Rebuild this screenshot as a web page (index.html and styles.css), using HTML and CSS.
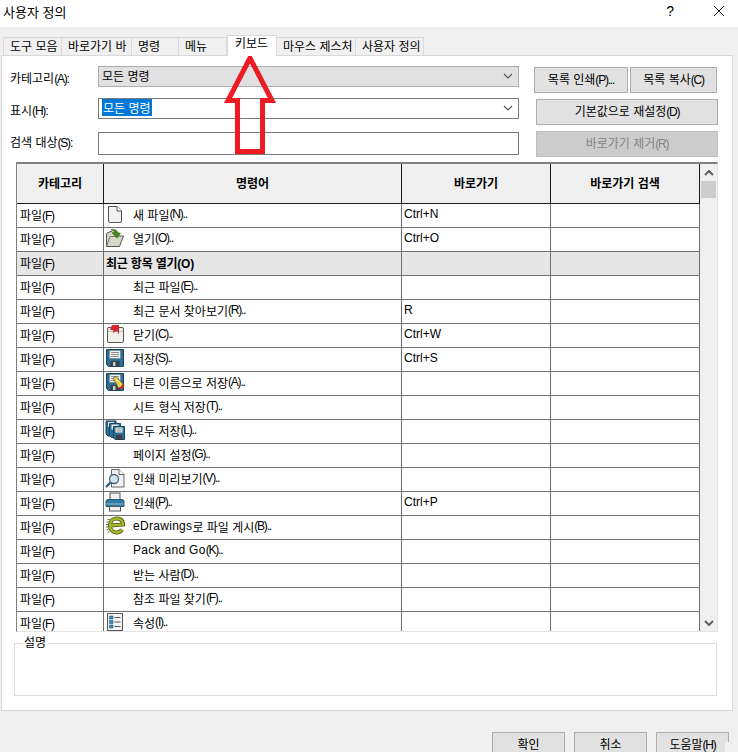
FILE: index.html
```html
<!DOCTYPE html>
<html lang="ko">
<head>
  <meta charset="UTF-8" />
  <title>사용자 정의</title>
  <link rel="stylesheet" href="styles.css">
</head>
<body>
  <!-- icon set -->
  <svg class="defs" width="0" height="0">
    <symbol id="i-new" viewBox="0 0 20 20">
      <path d="M3.500 2.500h8.500l4.500 4.500v10a1.500 1.500 0 0 1-1.500 1.500h-10a1.500 1.500 0 0 1-1.500-1.500z" fill="#f1f1f1" stroke="#555"/>
      <path d="M12 2.500v4.500h4.500" fill="#fff" stroke="#555"/>
    </symbol>
    <symbol id="i-open" viewBox="0 0 20 20">
      <path d="M1.500 18.500v-13l5-2.500 1 2h4v3h7l-4 10.500z" fill="#d8d6c8" stroke="#555"/>
      <path d="M1.500 18.500l3.500-10h7" fill="none" stroke="#777"/>
      <path d="M6 1.500c4-.5 6 .5 7 3.500h2.500l-3.500 5-4.500-5h2.500c-.5-1.500-2-2.500-4-3.500z" fill="#3f8a12" stroke="#2c6a0a" stroke-width=".6"/>
    </symbol>
    <symbol id="i-close" viewBox="0 0 20 20">
      <path d="M3 3.500h14a1.500 1.500 0 0 1 1.500 1.500v12a1.500 1.500 0 0 1-1.500 1.500h-13a1.500 1.500 0 0 1-1.500-1.500v-12z" fill="#f2f1ea" stroke="#555"/>
      <path d="M3 7.500h15" stroke="#bbb" fill="none"/>
      <path d="M7 1h7v9.500l-2-3.500c-1.500 0-3 1-3.500 2.500l-.5-3.500h-3z" fill="#d8262c"/>
    </symbol>
    <symbol id="i-save" viewBox="0 0 20 20">
      <path d="M1.500 1.500h17v17h-15l-2-2z" fill="#2d6f94" stroke="#17445f"/>
      <rect x="4.500" y="2.500" width="11" height="8" fill="#eceff0" stroke="#6b7f8a" stroke-width=".6"/>
      <path d="M6 4.500h8M6 6.500h8M6 8.500h8" stroke="#8a8f92"/>
      <rect x="5.500" y="13" width="9" height="5.500" fill="#3b3f42"/>
      <rect x="8" y="14" width="2.500" height="4" fill="#c9ced1"/>
    </symbol>
    <symbol id="i-saveas" viewBox="0 0 20 20">
      <use href="#i-save"/>
      <path d="M8 6l3-1.500 7 7.500-2 3-3 1-1-3z" fill="#f1d356" stroke="#59502a" stroke-width=".7"/>
      <path d="M13 16.500l3-1.500 2-3 1.500 1.500-2 3.500z" fill="#d8262c"/>
    </symbol>
    <symbol id="i-saveall" viewBox="0 0 20 20">
      <path d="M1 1h10v15h-8l-2-2z" fill="#2d6f94" stroke="#17445f"/>
      <path d="M3 2h6v5h-6z" fill="#dfe4e6"/>
      <path d="M4.500 3.500h11v14h-9l-2-2z" fill="#2d6f94" stroke="#17445f"/>
      <path d="M6.500 4.500h7v5h-7z" fill="#dfe4e6"/>
      <path d="M8.500 6.500h11v13h-9.500l-1.500-1.500z" fill="#2d6f94" stroke="#17445f"/>
      <rect x="10.500" y="7.500" width="7" height="5" fill="#eceff0"/>
      <path d="M11.500 9h5M11.500 11h5" stroke="#8a8f92"/>
      <rect x="11" y="15" width="6" height="4.500" fill="#3b3f42"/>
    </symbol>
    <symbol id="i-preview" viewBox="0 0 20 20">
      <path d="M6.500 1.500h7.500l5 5v12.500h-12.500z" fill="#f1f1f1" stroke="#666"/>
      <path d="M14 1.500v5h5" fill="#fff" stroke="#666"/>
      <circle cx="9" cy="11" r="4.500" fill="#d4e4ee" stroke="#4a6475" stroke-width="1.300"/>
      <path d="M5.500 14.500l-4.500 4.500" stroke="#2d5f80" stroke-width="2.400"/>
    </symbol>
    <symbol id="i-print" viewBox="0 0 20 20">
      <rect x="5" y="1" width="10" height="7" fill="#f1f1f1" stroke="#555"/>
      <path d="M1 9.500a2 2 0 0 1 2-2h14a2 2 0 0 1 2 2v5h-18z" fill="#2f7ca3" stroke="#1d5a7c"/>
      <path d="M1.500 12h17" stroke="#8fc3dc"/>
      <rect x="4.500" y="14.500" width="11" height="4.500" fill="#f1f1f1" stroke="#555"/>
    </symbol>
    <symbol id="i-edraw" viewBox="0 0 20 20">
      <path d="M2.500 3.500h2M1.500 6h2M1 8.500h2M1 11h2M1.500 13.500h2M2.500 16h2" stroke="#666" fill="none"/>
      <path d="M6 9.500l12-1c0-4-2.500-6-6.500-6s-6.500 3-6.500 7 2.500 7 6.500 7c2.500 0 4.500-1 5.500-3" fill="none" stroke="#4d5210" stroke-width="4"/>
      <path d="M6 9.500l12-1c0-4-2.500-6-6.500-6s-6.500 3-6.500 7 2.500 7 6.500 7c2.500 0 4.500-1 5.500-3" fill="none" stroke="#a8b82c" stroke-width="2.400"/>
    </symbol>
    <symbol id="i-props" viewBox="0 0 20 20">
      <rect x="2.500" y="1.500" width="15" height="17" fill="#f3f3f3" stroke="#555"/>
      <path d="M4.500 4h3.500v3h-3.500zM4.500 8.500h3.500v3h-3.500zM4.500 13h3.500v3h-3.500z" fill="#3d8ab5" stroke="#1f5f85" stroke-width=".6"/>
      <path d="M9.500 5.500h6M9.500 10h6M9.500 14.500h6" stroke="#555"/>
    </symbol>
  </svg>

  <header class="titlebar">
    <span class="title">사용자 정의</span>
    <span class="help">?</span>
    <svg class="close-x" width="12" height="12" viewBox="0 0 12 12"><path d="M1 1l10 10M11 1l-10 10" stroke="#222" fill="none"/></svg>
  </header>

  <main class="dialog">
    <nav class="tabs">
      <div class="tab">도구 모음</div>
      <div class="tab">바로가기 바</div>
      <div class="tab">명령</div>
      <div class="tab">메뉴</div>
      <div class="tab active">키보드</div>
      <div class="tab">마우스 제스처</div>
      <div class="tab">사용자 정의</div>
    </nav>

    <section class="panel">
      <div class="form">
        <div class="fields">
          <div class="field">
            <label>카테고리<span class="key">(A):</span></label>
            <div class="combo locked">모든 명령
              <svg class="chevron" width="10" height="6" viewBox="0 0 10 6"><path d="M1 1l4 4 4-4" fill="none" stroke="#555" stroke-width="1.200"/></svg>
            </div>
          </div>
          <div class="field">
            <label>표시<span class="key">(H):</span></label>
            <div class="combo"><span class="selected">모든 명령</span>
              <svg class="chevron" width="10" height="6" viewBox="0 0 10 6"><path d="M1 1l4 4 4-4" fill="none" stroke="#555" stroke-width="1.200"/></svg>
            </div>
          </div>
          <div class="field search">
            <label>검색 대상<span class="key">(S):</span></label>
            <div class="combo tall"></div>
          </div>
        </div>
        <div class="actions">
          <div class="btn-row">
            <button class="btn print">목록 인쇄<span class="key">(P)...</span></button>
            <button class="btn copy">목록 복사<span class="key">(C)</span></button>
          </div>
          <button class="btn wide">기본값으로 재설정<span class="key">(D)</span></button>
          <button class="btn wide disabled">바로가기 제거<span class="key">(R)</span></button>
        </div>
      </div>

      <div class="grid">
        <table class="cmds">
          <colgroup><col class="c1"><col class="c2"><col class="c3"><col class="c4"></colgroup>
          <thead>
            <tr><th>카테고리</th><th>명령어</th><th>바로가기</th><th>바로가기 검색</th></tr>
          </thead>
          <tbody>
            <tr><td>파일<span class="key">(F)</span></td><td><div class="cmd"><svg class="ico"><use href="#i-new"/></svg>새 파일<span class="key">(N)..</span></div></td><td>Ctrl+N</td><td></td></tr>
            <tr><td>파일<span class="key">(F)</span></td><td><div class="cmd"><svg class="ico"><use href="#i-open"/></svg>열기<span class="key">(O)..</span></div></td><td>Ctrl+O</td><td></td></tr>
            <tr class="group"><td>파일<span class="key">(F)</span></td><td class="bold">최근 항목 열기(O)</td><td></td><td></td></tr>
            <tr><td>파일<span class="key">(F)</span></td><td><div class="cmd plain">최근 파일<span class="key">(E)..</span></div></td><td></td><td></td></tr>
            <tr><td>파일<span class="key">(F)</span></td><td><div class="cmd plain">최근 문서 찾아보기<span class="key">(R)..</span></div></td><td>R</td><td></td></tr>
            <tr><td>파일<span class="key">(F)</span></td><td><div class="cmd"><svg class="ico"><use href="#i-close"/></svg>닫기<span class="key">(C)..</span></div></td><td>Ctrl+W</td><td></td></tr>
            <tr><td>파일<span class="key">(F)</span></td><td><div class="cmd"><svg class="ico"><use href="#i-save"/></svg>저장<span class="key">(S)..</span></div></td><td>Ctrl+S</td><td></td></tr>
            <tr><td>파일<span class="key">(F)</span></td><td><div class="cmd"><svg class="ico"><use href="#i-saveas"/></svg>다른 이름으로 저장<span class="key">(A)..</span></div></td><td></td><td></td></tr>
            <tr><td>파일<span class="key">(F)</span></td><td><div class="cmd plain">시트 형식 저장<span class="key">(T)..</span></div></td><td></td><td></td></tr>
            <tr><td>파일<span class="key">(F)</span></td><td><div class="cmd"><svg class="ico"><use href="#i-saveall"/></svg>모두 저장<span class="key">(L)..</span></div></td><td></td><td></td></tr>
            <tr><td>파일<span class="key">(F)</span></td><td><div class="cmd plain">페이지 설정<span class="key">(G)..</span></div></td><td></td><td></td></tr>
            <tr><td>파일<span class="key">(F)</span></td><td><div class="cmd"><svg class="ico"><use href="#i-preview"/></svg>인쇄 미리보기<span class="key">(V)..</span></div></td><td></td><td></td></tr>
            <tr><td>파일<span class="key">(F)</span></td><td><div class="cmd"><svg class="ico"><use href="#i-print"/></svg>인쇄<span class="key">(P)..</span></div></td><td>Ctrl+P</td><td></td></tr>
            <tr><td>파일<span class="key">(F)</span></td><td><div class="cmd"><svg class="ico"><use href="#i-edraw"/></svg><span class="wide-latin">eDrawings</span>로 파일 게시<span class="key">(B)..</span></div></td><td></td><td></td></tr>
            <tr><td>파일<span class="key">(F)</span></td><td><div class="cmd plain"><span class="wide-latin">Pack and Go</span><span class="key">(K)..</span></div></td><td></td><td></td></tr>
            <tr><td>파일<span class="key">(F)</span></td><td><div class="cmd plain">받는 사람<span class="key">(D)..</span></div></td><td></td><td></td></tr>
            <tr><td>파일<span class="key">(F)</span></td><td><div class="cmd plain">참조 파일 찾기<span class="key">(F)..</span></div></td><td></td><td></td></tr>
            <tr><td>파일<span class="key">(F)</span></td><td><div class="cmd"><svg class="ico"><use href="#i-props"/></svg>속성<span class="key">(I)..</span></div></td><td></td><td></td></tr>
          </tbody>
        </table>
        <div class="scrollbar">
          <svg width="10" height="6" viewBox="0 0 10 6"><path d="M1 5l4-4 4 4" fill="none" stroke="#606060" stroke-width="2"/></svg>
          <div class="thumb"></div>
          <svg class="down" width="10" height="6" viewBox="0 0 10 6"><path d="M1 1l4 4 4-4" fill="none" stroke="#606060" stroke-width="2"/></svg>
        </div>
      </div>

      <fieldset class="desc">
        <legend>설명</legend>
      </fieldset>
    </section>

    <footer class="footer">
      <button class="btn foot">확인</button>
      <button class="btn foot">취소</button>
      <button class="btn foot">도움말<span class="key">(H)</span></button>
    </footer>
  </main>

  <div class="grip"></div>

  <!-- red annotation arrow -->
  <svg class="arrow" width="60" height="110" viewBox="0 0 60 110">
    <path d="M30 12L8 54.500H17.500V105.500H42.500V54.500H52Z" fill="none" stroke="#ed1c24" stroke-width="5"/>
  </svg>
</body>
</html>
```

FILE: styles.css
```css
* {
  box-sizing: border-box;
}

body {
  position: relative;
  margin: 0;
  width: 738px;
  height: 752px;
  overflow: hidden;
  background: #fff;
  color: #000;
  font-family: "Liberation Sans", "Noto Sans CJK KR", sans-serif;
  font-size: 12px;
}

.defs {
  position: absolute;
}

/* mnemonics are narrow in the original font */
.key {
  letter-spacing: -1.2px;
}
.wide-latin {
  letter-spacing: 0.3px;
}

/* title bar */
.titlebar {
  display: flex;
  align-items: center;
  height: 27px;
  padding: 0 13px 5px 3px;
}
.title {
  flex: 1;
  font-size: 13px;
}
.help {
  margin-right: 39px;
  font-size: 14px;
}

.dialog {
  height: 725px;
  padding-top: 8px;
  background: #f0f0f0;
}

/* tabs */
.tabs {
  display: grid;
  grid-template-columns: 59px 70px 47px 48px 50px 79px 68px;
  align-items: end;
  height: 20px;
  margin-left: 3px;
}
.tab {
  height: 18px;
  padding: 1px 0 0 6px;
  line-height: 16px;
  background: #f0f0f0;
  border: 1px solid #d9d9d9;
  border-bottom: none;
  border-left: none;
  white-space: nowrap;
}
.tab:first-child {
  border-left: 1px solid #d9d9d9;
}
.tab.active {
  position: relative;
  z-index: 1;
  height: 21px;
  margin-bottom: -1px;
  padding-top: 0;
  padding-left: 7px;
  background: #fff;
  border-left: 1px solid #d9d9d9;
}

.panel {
  width: 732px;
  height: 656px;
  margin-left: 1px;
  padding: 10px 0 0 8px;
  background: #fff;
  border: 1px solid #d9d9d9;
}

/* top form */
.form {
  display: flex;
  gap: 15px;
  height: 91px;
}
.fields {
  width: 509px;
}
.field {
  display: flex;
  align-items: center;
  margin-bottom: 11px;
}
.field.search {
  margin-top: 13px;
}
.field label {
  width: 88px;
  padding-top: 2px;
}
.field.search label {
  padding: 0 0 5px;
}
.combo {
  display: flex;
  align-items: center;
  justify-content: space-between;
  flex: 1;
  height: 21px;
  padding: 0 5px 2px 3px;
  background: #fff;
  border: 1px solid #7a7a7a;
}
.combo.locked {
  background: #e1e1e1;
  border-color: #adadad;
}
.combo.tall {
  height: 23px;
}
.selected {
  padding: 0 1px;
  background: #0078d7;
  color: #fff;
}
.chevron {
  margin-top: 1px;
}

.actions {
  display: flex;
  flex-direction: column;
  gap: 6px;
  padding-top: 1px;
}
.btn-row {
  display: flex;
  gap: 2px;
}
.btn {
  height: 26px;
  padding: 0 0 3px;
  background: #e1e1e1;
  border: 1px solid #adadad;
  color: #000;
  font: inherit;
}
.btn.print {
  width: 94px;
}
.btn.copy {
  width: 87px;
}
.btn.wide {
  width: 182px;
  margin-left: 2px;
}
.btn.disabled {
  background: #cccccc;
  border-color: #bfbfbf;
  color: #838383;
}

/* command table */
.grid {
  display: flex;
  width: 702px;
  height: 470px;
  margin: 5px 0 0 6px;
  overflow: hidden;
  border-top: 2px solid #808080;
  border-left: 1px solid #808080;
  border-right: 1px solid #e3e3e3;
  border-bottom: 1px solid #e3e3e3;
}
.cmds {
  flex: none;
  width: 683px;
  height: 0;
  table-layout: fixed;
  border-collapse: separate;
  border-spacing: 0;
}
.c1 {
  width: 87px;
}
.c2 {
  width: 298px;
}
.c3,
.c4 {
  width: 149px;
}
.cmds th {
  height: 40px;
  padding: 0 0 2px;
  background: #f0f0f0;
  border-right: 1px solid #1a1a1a;
  border-bottom: 1px solid #1a1a1a;
  font-weight: bold;
}
.cmds td {
  height: 24px;
  padding: 0 0 3px 2px;
  border-right: 1px solid #6e6e6e;
  border-bottom: 1px solid #6e6e6e;
  white-space: nowrap;
}
.cmds td:first-child {
  padding-left: 3px;
}
.cmds tr.group td {
  background: #e6e6e6;
}
.cmds td.bold {
  font-weight: bold;
  letter-spacing: -0.2px;
}
.cmd {
  display: flex;
  align-items: center;
  height: 20px;
  white-space: pre;
}
.cmd.plain {
  padding-left: 27px;
}
.ico {
  width: 20px;
  height: 20px;
  margin-left: -1px;
  margin-right: 8px;
}
.scrollbar {
  display: flex;
  flex: 1;
  flex-direction: column;
  align-items: center;
  padding-top: 6px;
  background: #f0f0f0;
}
.thumb {
  width: 15px;
  height: 17px;
  margin-top: 5px;
  background: #cdcdcd;
}
.scrollbar .down {
  margin-top: auto;
  margin-bottom: 5px;
}

/* description box */
.desc {
  width: 703px;
  height: 60px;
  margin: 4px 0 0 4px;
  padding: 0;
  border: 1px solid #dcdcdc;
}
.desc legend {
  margin-left: 7px;
  padding: 0 2px;
  line-height: 14px;
}

/* bottom buttons */
.footer {
  display: flex;
  justify-content: flex-end;
  gap: 9px;
  margin-top: 21px;
  padding-right: 9px;
}
.btn.foot {
  width: 73px;
  padding-bottom: 4px;
}

.grip {
  position: absolute;
  right: 0;
  bottom: 0;
  width: 13px;
  height: 10px;
  background: #f0f0f0;
}

.arrow {
  position: absolute;
  left: 220px;
  top: 46px;
}
```
